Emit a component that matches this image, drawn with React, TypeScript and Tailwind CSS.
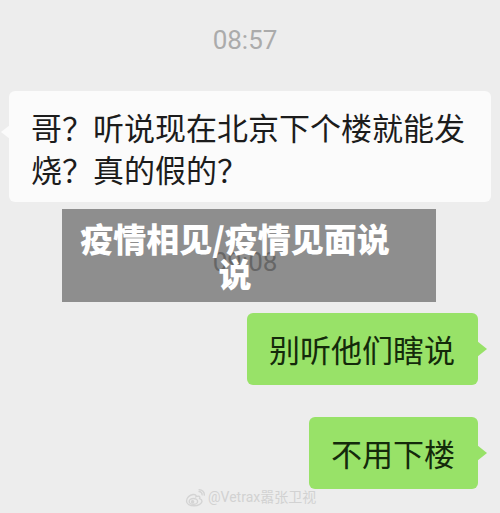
import React from "react";

const cjk = { fontFamily: '"Noto Sans CJK SC", "Noto Sans", sans-serif' };

const WeiboLogo = () => (
  <svg width="20" height="18" viewBox="0 0 20 18" fill="none" stroke="#d4d4d4" strokeWidth="1.4">
    <path d="M8 5.5C4.5 6 1.5 9 1.5 12c0 3 3.5 4.8 7.5 4.8 4.5 0 8-2.3 8-4.6 0-1.6-1.5-2.2-2.4-2.5.6-1.3.4-2.6-1.4-2.6-1.1 0-2.2.6-2.2.6.4-1.4-.4-2.4-3-2.2z" />
    <ellipse cx="8.4" cy="12.4" rx="4.2" ry="2.9" />
    <circle cx="7.6" cy="12.8" r="1.1" fill="#d4d4d4" />
    <path d="M13.5 2.6c2.2-.3 4 1.6 3.6 3.8" />
    <path d="M13.6 0.8c3.4-.5 6.3 2.4 5.6 5.8" />
  </svg>
);

const Timestamp = ({ time, className }: { time: string; className?: string }) => (
  <div
    className={`pr-[10px] text-center text-[26px] leading-[32px] text-[#ababab] ${className ?? ""}`}
    style={{ fontFamily: 'Roboto, "Noto Sans", sans-serif' }}
  >
    {time}
  </div>
);

const GreenBubble = ({ text, className }: { text: string; className?: string }) => (
  <div className={`relative self-end mr-[22px] rounded-[6px] bg-[#98e268] pl-[22px] pr-[23px] text-[31px] leading-[42px] text-[#142a0b] ${className ?? ""}`}>
    <span className="block py-[15px]">{text}</span>
    <span className="absolute right-[-9px] top-1/2 -translate-y-1/2 h-0 w-0 border-y-[8px] border-l-[10px] border-y-transparent border-l-[#98e268]" />
  </div>
);

export default function App() {
  return (
    <div className="relative h-[513px] w-[500px] overflow-hidden bg-[#ededed]" style={cjk}>
      <div className="flex flex-col pt-[24px]">
        <Timestamp time="08:57" />

        <div className="relative mx-[9px] mt-[35px] rounded-[6px] bg-[#fbfbfb] px-[22px] pt-[15px] pb-[12px] text-[31px] leading-[42px] text-[#1c1c1c]">
          哥？听说现在北京下个楼就能发烧？真的假的？
          <span className="absolute left-[-8px] top-[34px] h-0 w-0 border-y-[7px] border-r-[9px] border-y-transparent border-r-[#fbfbfb]" />
        </div>

        <Timestamp time="09:08" className="mt-[44px]" />

        <GreenBubble text="别听他们瞎说" className="mt-[35px]" />
        <GreenBubble text="不用下楼" className="mt-[32px]" />
      </div>

      <div className="absolute left-[62px] top-[209px] flex h-[93px] w-[374px] items-center bg-black/40 pl-4 pr-[44px]">
        <p className="w-full text-center text-[33px] font-black leading-[35px] text-white">
          疫情相见/疫情见面说说
        </p>
      </div>

      <div className="absolute left-[185px] top-[487px] flex items-center gap-[3px] text-[14px] text-[#d2d2d2]">
        <WeiboLogo />
        <span style={{ fontFamily: 'Roboto, "Noto Sans CJK SC", sans-serif' }}>@Vetrax嚣张卫视</span>
      </div>
    </div>
  );
}
